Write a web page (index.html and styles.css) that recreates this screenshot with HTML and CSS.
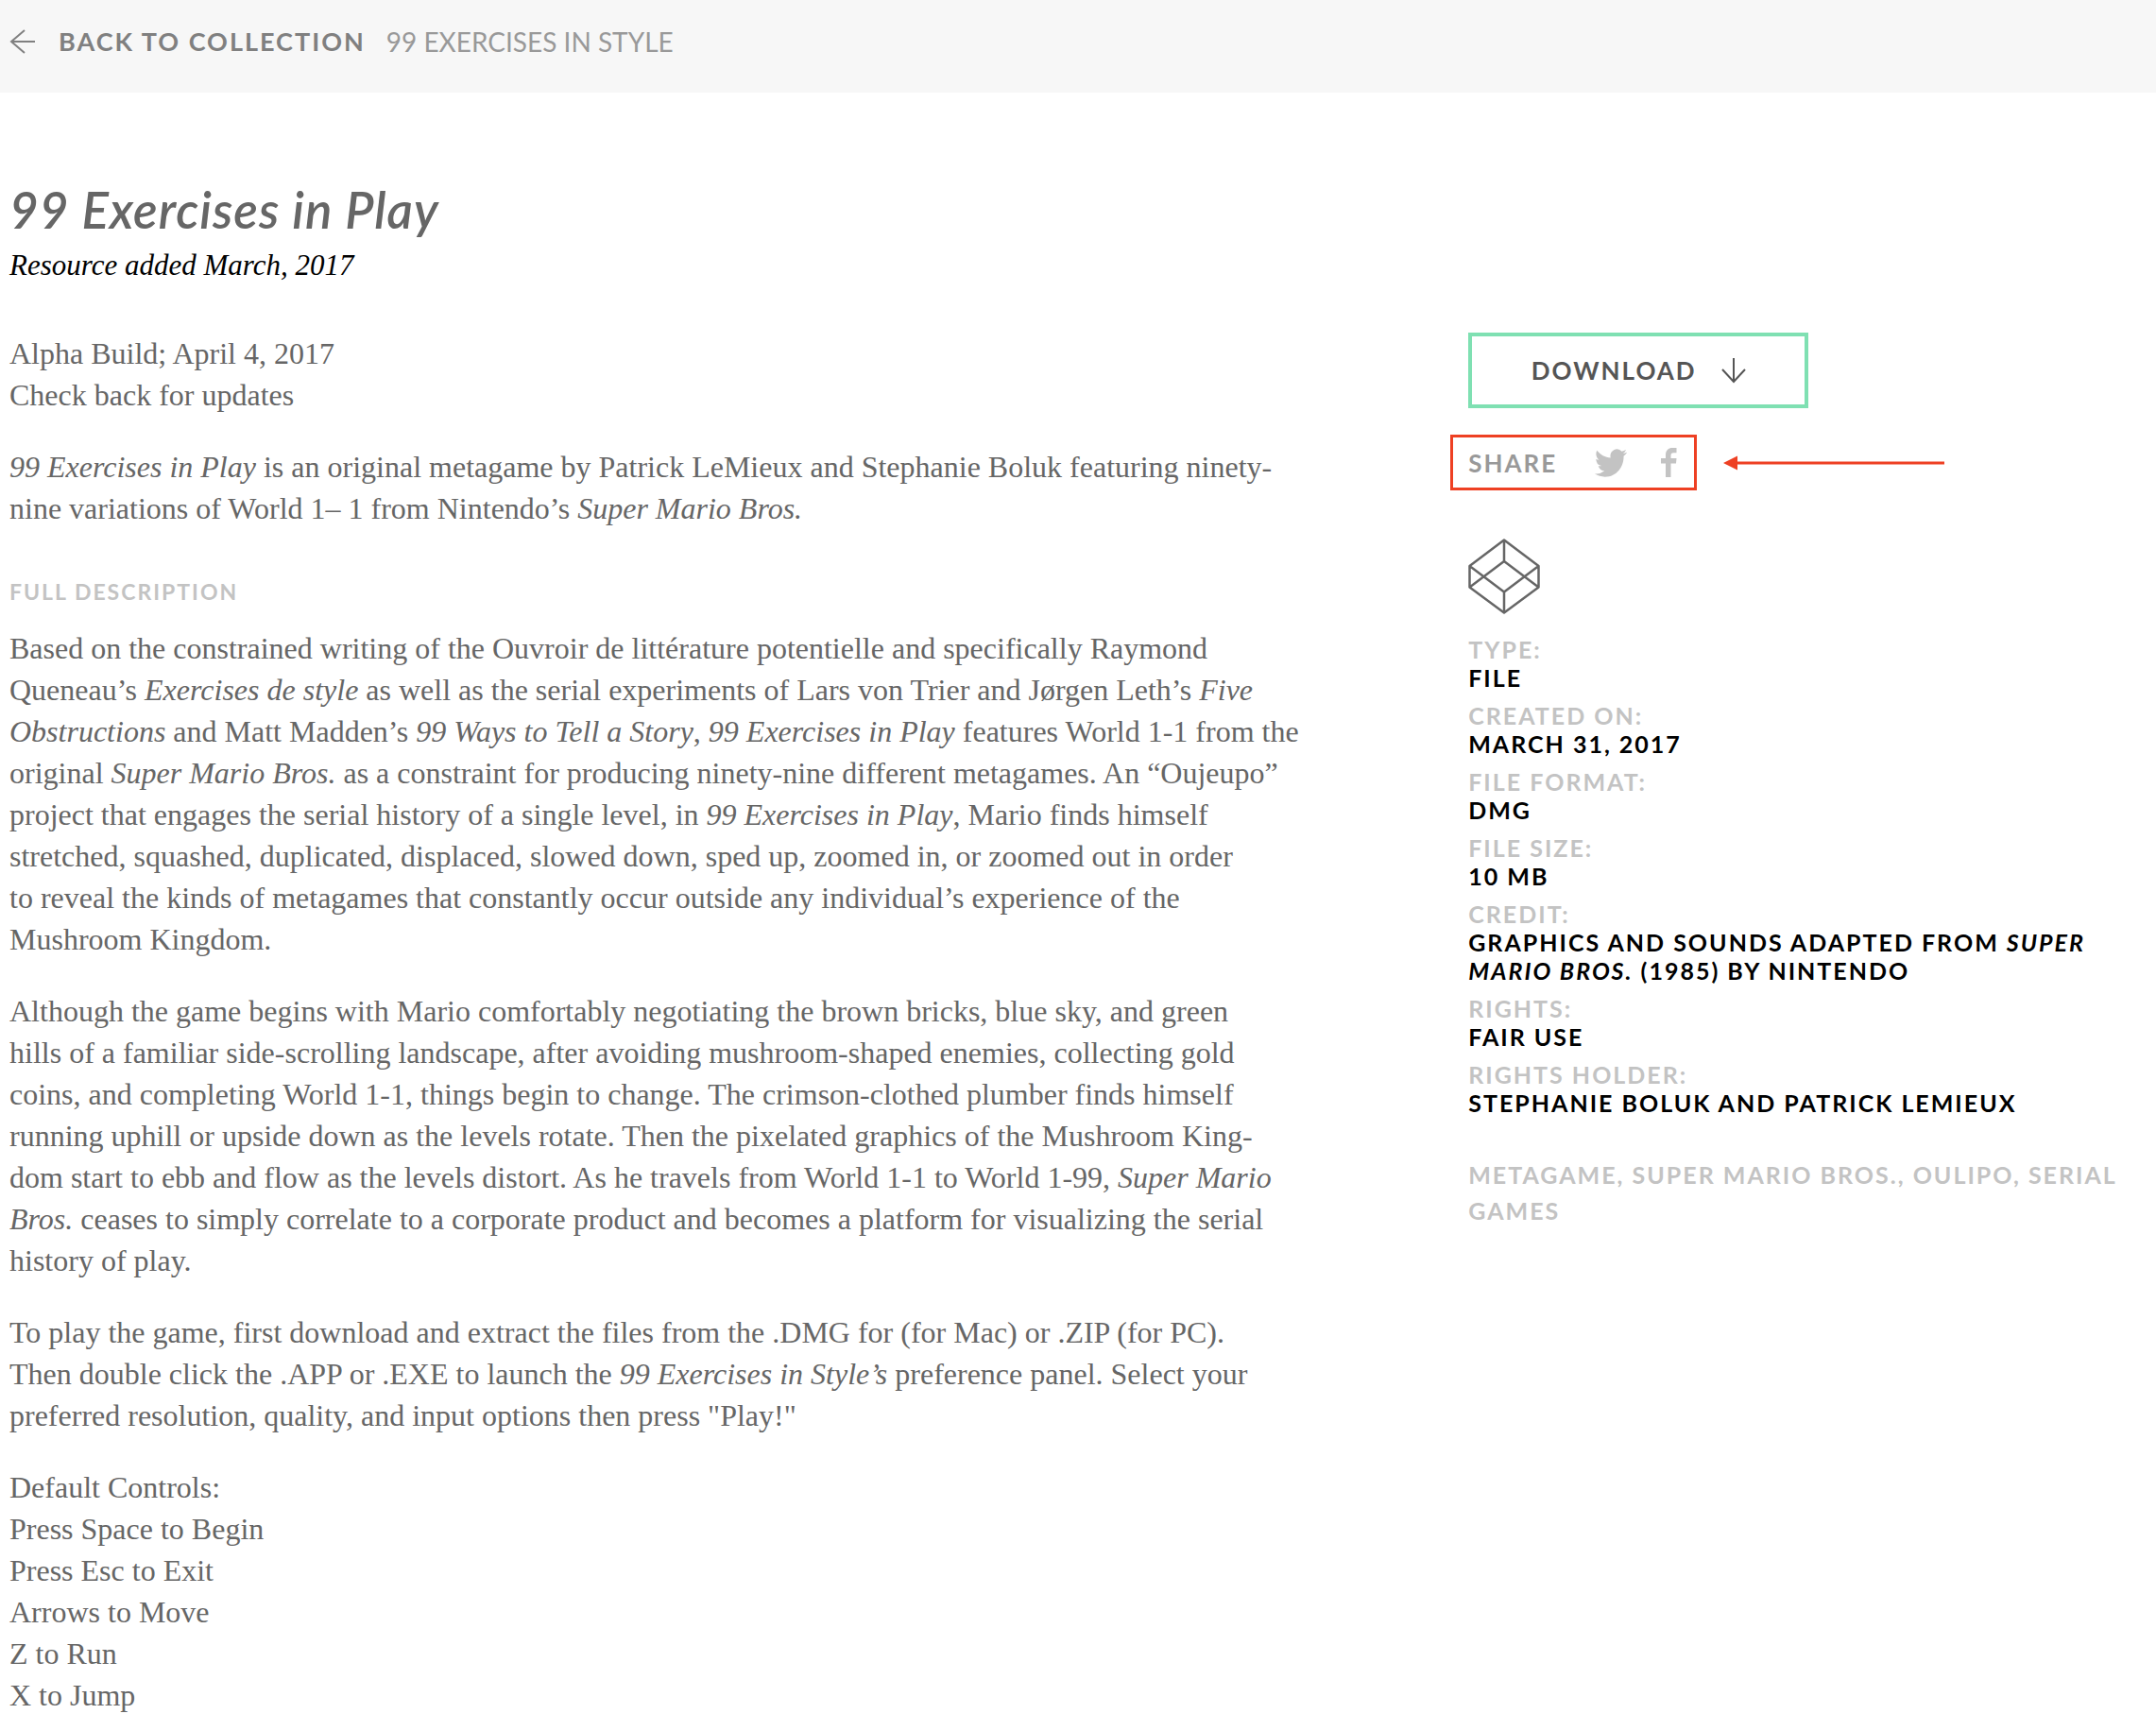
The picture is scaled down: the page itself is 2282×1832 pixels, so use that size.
FILE: index.html
```html
<!DOCTYPE html>
<html lang="en">
<head>
<meta charset="utf-8">
<meta name="viewport" content="width=device-width, initial-scale=1">
<title>99 Exercises in Play</title>
<link rel="stylesheet" href="styles.css">
</head>
<body>
<header class="topbar">
  <a class="back" href="#">
    <svg class="back-arrow" width="28" height="28" viewBox="0 0 28 28" fill="none" stroke="currentColor" stroke-width="2" aria-hidden="true"><path d="M27 14H2M16 2L2 14l14 12"/></svg>
    <span>Back to collection</span>
  </a>
  <a class="collection" href="#">99 Exercises in Style</a>
</header>

<main class="page">
  <div class="heading">
    <h1 class="title">99 Exercises in Play</h1>
    <p class="added">Resource added March, 2017</p>
  </div>

  <div class="columns">
    <article class="article">
      <p>Alpha Build; April 4, 2017<br>Check back for updates</p>
      <p><em>99 Exercises in Play</em> is an original metagame by Patrick LeMieux and Stephanie Boluk featuring ninety-<br>nine variations of World 1– 1 from Nintendo’s <em>Super Mario Bros.</em></p>
      <h2 class="section">Full description</h2>
      <p>Based on the constrained writing of the Ouvroir de littérature potentielle and specifically Raymond<br>
      Queneau’s <em>Exercises de style</em> as well as the serial experiments of Lars von Trier and Jørgen Leth’s <em>Five<br>
      Obstructions</em> and Matt Madden’s <em>99 Ways to Tell a Story</em>, <em>99 Exercises in Play</em> features World 1-1 from the<br>
      original <em>Super Mario Bros.</em> as a constraint for producing ninety-nine different metagames. An “Oujeupo”<br>
      project that engages the serial history of a single level, in <em>99 Exercises in Play</em>, Mario finds himself<br>
      stretched, squashed, duplicated, displaced, slowed down, sped up, zoomed in, or zoomed out in order<br>
      to reveal the kinds of metagames that constantly occur outside any individual’s experience of the<br>
      Mushroom Kingdom.</p>
      <p>Although the game begins with Mario comfortably negotiating the brown bricks, blue sky, and green<br>
      hills of a familiar side-scrolling landscape, after avoiding mushroom-shaped enemies, collecting gold<br>
      coins, and completing World 1-1, things begin to change. The crimson-clothed plumber finds himself<br>
      running uphill or upside down as the levels rotate. Then the pixelated graphics of the Mushroom King-<br>
      dom start to ebb and flow as the levels distort. As he travels from World 1-1 to World 1-99, <em>Super Mario<br>
      Bros.</em> ceases to simply correlate to a corporate product and becomes a platform for visualizing the serial<br>
      history of play.</p>
      <p>To play the game, first download and extract the files from the .DMG for (for Mac) or .ZIP (for PC).<br>
      Then double click the .APP or .EXE to launch the <em>99 Exercises in Style’s</em> preference panel. Select your<br>
      preferred resolution, quality, and input options then press "Play!"</p>
      <p>Default Controls:<br>Press Space to Begin<br>Press Esc to Exit<br>Arrows to Move<br>Z to Run<br>X to Jump</p>
    </article>

    <aside class="sidebar">
      <button class="download" type="button">
        <span>Download</span>
        <svg width="26" height="28" viewBox="0 0 26 28" fill="none" stroke="currentColor" stroke-width="2" aria-hidden="true"><path d="M13 1v25M1 13l12 13 12-13"/></svg>
      </button>

      <div class="share-row">
        <div class="share">
          <span class="share-label">Share</span>
          <a href="#" aria-label="Share on Twitter"><svg width="34" height="30" viewBox="0 2 24 20" fill="currentColor" preserveAspectRatio="none" aria-hidden="true"><path d="M23.953 4.57a10 10 0 01-2.825.775 4.958 4.958 0 002.163-2.723c-.951.555-2.005.959-3.127 1.184a4.92 4.92 0 00-8.384 4.482C7.69 8.095 4.067 6.13 1.64 3.162a4.822 4.822 0 00-.666 2.475c0 1.71.87 3.213 2.188 4.096a4.904 4.904 0 01-2.228-.616v.06a4.923 4.923 0 003.946 4.827 4.996 4.996 0 01-2.212.085 4.936 4.936 0 004.604 3.417 9.867 9.867 0 01-6.102 2.105c-.39 0-.779-.023-1.17-.067a13.995 13.995 0 007.557 2.209c9.053 0 13.998-7.496 13.998-13.985 0-.21 0-.42-.015-.63A9.935 9.935 0 0024 4.59z"/></svg></a>
          <a href="#" aria-label="Share on Facebook"><svg width="17" height="31" viewBox="0 0 17 31" fill="currentColor" aria-hidden="true"><path d="M5 31V16.500H0V11H5V7.500C5 2.500 8 0 12 0H16.500V5.200H13.500C11.200 5.200 10.500 6.200 10.500 8.200V11H16.500L16 16.500H10.500V31Z"/></svg></a>
        </div>
        <svg class="pointer" width="234" height="16" viewBox="0 0 234 16" fill="#ee4023" aria-hidden="true"><path d="M0 8L15 0.500V15.500ZM14 6.500H234V9.500H14Z"/></svg>
      </div>

      <svg class="type-icon" width="76" height="80" viewBox="0 0 76 80" fill="none" stroke="currentColor" stroke-width="2.500" stroke-linejoin="round" aria-hidden="true"><path d="M38 1.500L74.500 29V51.500L38 78.500L1.500 51.500V29ZM38 1.500V24L74.500 51.500M38 24L1.500 51.500M38 78.500V56.500L1.500 29M38 56.500L74.500 29"/></svg>

      <dl class="meta">
        <div><dt>Type:</dt><dd>File</dd></div>
        <div><dt>Created on:</dt><dd>March 31, 2017</dd></div>
        <div><dt>File format:</dt><dd>DMG</dd></div>
        <div><dt>File size:</dt><dd>10 MB</dd></div>
        <div><dt>Credit:</dt><dd>Graphics and sounds adapted from <em>Super<br>Mario Bros.</em> (1985) by Nintendo</dd></div>
        <div><dt>Rights:</dt><dd>Fair use</dd></div>
        <div><dt>Rights holder:</dt><dd>Stephanie Boluk and Patrick LeMieux</dd></div>
      </dl>

      <p class="tags"><a href="#">Metagame</a>, <a href="#">Super Mario Bros.</a>, <a href="#">Oulipo</a>, <a href="#">Serial<br>games</a></p>
    </aside>
  </div>
</main>
</body>
</html>
```
FILE: styles.css
```css
* { box-sizing: border-box; }

body {
  margin: 0;
  background: #fff;
  color: #666;
  font-family: "Liberation Serif", serif;
  font-size: 32px;
  line-height: 44px;
}

h1, h2, p, dl, dd { margin: 0; }
a { color: inherit; text-decoration: none; }
svg { display: block; flex: none; }

.topbar {
  display: flex;
  align-items: center;
  gap: 22px;
  padding: 22px 10px 32px;
  background: #f7f7f7;
  color: #999;
  font-family: Lato, sans-serif;
  font-size: 28px;
  text-transform: uppercase;
}

.back {
  display: flex;
  align-items: center;
  gap: 24px;
  color: #808080;
  font-weight: 700;
  font-size: 27px;
  letter-spacing: 2px;
}

.page { padding: 94px 20px 12px 10px; }

.heading { padding-bottom: 49px; }

.title {
  font: italic 600 53px/60px Lato, sans-serif;
  letter-spacing: 1px;
}

.added {
  color: #000;
  font-size: 31px;
  font-style: italic;
  padding-top: 7px;
}

.columns {
  display: grid;
  grid-template-columns: 24fr 11fr;
}

.article p { margin-bottom: 32px; white-space: nowrap; }

.section {
  margin: 44px 0 16px;
  color: #c3c3c3;
  font: 700 23px/44px Lato, sans-serif;
  letter-spacing: 2px;
  text-transform: uppercase;
}

.sidebar {
  font-family: Lato, sans-serif;
  font-size: 25px;
  font-weight: 700;
  line-height: 30px;
  letter-spacing: 2px;
  text-transform: uppercase;
}

.download {
  display: flex;
  align-items: center;
  justify-content: center;
  gap: 26px;
  width: 360px;
  height: 80px;
  border: 4px solid #7fe0b2;
  background: #fff;
  color: #555;
  font: inherit;
  font-size: 26px;
  letter-spacing: 2px;
  text-transform: uppercase;
}

.share-row {
  display: flex;
  align-items: center;
  gap: 28px;
  margin: 28px 0 51px -19px;
}

.share {
  display: flex;
  align-items: center;
  gap: 36px;
  width: 261px;
  height: 59px;
  padding: 0 18px 0 16px;
  border: 3px solid #ee4023;
  color: #c3c3c3;
}

.share-label {
  margin-right: auto;
  color: #999;
  font-size: 26px;
}

.type-icon { margin-bottom: 22px; }

.meta { display: grid; gap: 10px; }
.meta dt { color: #c3c3c3; }
.meta dd { color: #000; }

.tags { margin-top: 42px; color: #c3c3c3; line-height: 38px; white-space: nowrap; }
```
